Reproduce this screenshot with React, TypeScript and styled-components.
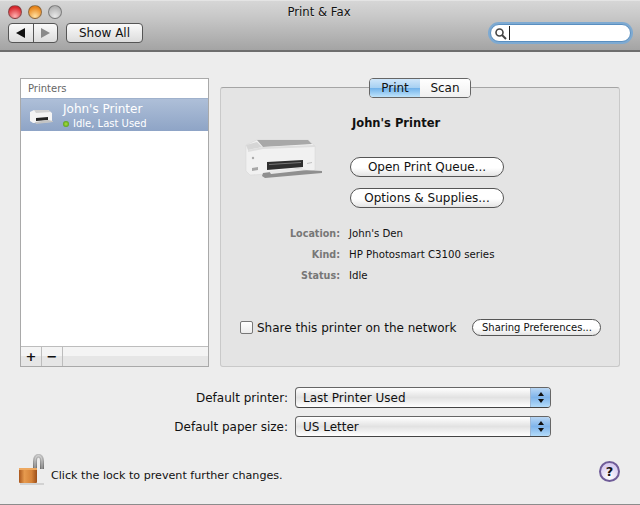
import styled, { createGlobalStyle } from 'styled-components';

const Global = createGlobalStyle`
  html, body { margin: 0; padding: 0; background: #ededed; }
  body { font-family: "DejaVu Sans", "Open Sans", sans-serif; color: #111; }
`;

const Window = styled.div`
  width: 640px;
  height: 505px;
  overflow: hidden;
  display: flex;
  flex-direction: column;
  background: #ededed;
  border-bottom: 1px solid #8c8c8c;
  box-sizing: border-box;
`;

const TitleBar = styled.header`
  height: 52px;
  flex: none;
  box-sizing: border-box;
  background: linear-gradient(#d6d6d6, #c9c9c9 30%, #a4a4a4);
  border-bottom: 2px solid #6e6e6e;
  border-top: 1px solid #e4e4e4;
`;

const TitleRow = styled.div`
  height: 21px;
  display: grid;
  grid-template-columns: 1fr auto 1fr;
  align-items: center;
  padding: 0 8px;
`;

const Lights = styled.div`
  display: flex;
  gap: 6px;
`;

const Light = styled.span<{ $from: string; $to: string }>`
  width: 14px;
  height: 14px;
  box-sizing: border-box;
  border-radius: 50%;
  border: 1px solid rgba(70, 70, 70, 0.55);
  background: radial-gradient(circle at 50% 85%, ${p => p.$from}, ${p => p.$to} 75%);
`;

const Title = styled.div`
  font-size: 11.7px;
  color: #111;
  margin-left: -2px;
  text-shadow: 0 1px 0 rgba(255, 255, 255, 0.4);
`;

const Toolbar = styled.div`
  display: flex;
  align-items: center;
  padding: 1px 8px 0;
  gap: 8px;
`;

const NavGroup = styled.div`
  width: 50px;
  height: 20px;
  box-sizing: border-box;
  display: flex;
  border: 1px solid #555;
  border-radius: 4px;
  overflow: hidden;
  background: linear-gradient(#fafafa, #dcdcdc);
`;

const NavButton = styled.span<{ $divider?: boolean }>`
  flex: 1;
  display: flex;
  align-items: center;
  justify-content: center;
  ${p => (p.$divider ? 'border-right: 1px solid #555;' : '')}
`;

const ToolButton = styled.div`
  width: 77px;
  height: 20px;
  box-sizing: border-box;
  border: 1px solid #555;
  border-radius: 4px;
  background: linear-gradient(#fafafa, #dcdcdc);
  font-size: 12px;
  display: flex;
  align-items: center;
  justify-content: center;
`;

const SearchField = styled.div`
  margin-left: auto;
  margin-right: 1px;
  width: 141px;
  height: 18px;
  display: flex;
  align-items: center;
  gap: 2px;
  padding-left: 3px;
  box-sizing: border-box;
  background: #fff;
  border-radius: 10px;
  border: 1px solid #5a8fc0;
  box-shadow: 0 0 0 2px #7eaad2;
`;

const Caret = styled.span`
  width: 1px;
  height: 14px;
  background: #222;
`;

const Content = styled.main`
  flex: 1;
  display: flex;
  flex-direction: column;
  padding: 26px 20px 0;
`;

const Columns = styled.div`
  display: flex;
  gap: 11px;
  height: 289px;
`;

const ListPane = styled.section`
  width: 189px;
  height: 289px;
  box-sizing: border-box;
  border: 1px solid #a9a9a9;
  background: #fff;
  display: flex;
  flex-direction: column;
`;

const ListHeader = styled.div`
  height: 19px;
  flex: none;
  font-size: 10px;
  color: #666;
  padding-left: 7px;
  display: flex;
  align-items: center;
`;

const ListRow = styled.div`
  height: 33px;
  flex: none;
  display: flex;
  align-items: center;
  gap: 6px;
  padding: 1px 0 0 9px;
  box-sizing: border-box;
  background: linear-gradient(#aebfd8, #8ea4c6);
  border-top: 1px solid #9fb1cc;
  color: #fff;
`;

const RowText = styled.div`
  display: flex;
  flex-direction: column;
  gap: 2px;
`;

const RowName = styled.div`
  font-size: 12px;
  line-height: 14px;
`;

const RowStatus = styled.div`
  display: flex;
  align-items: center;
  gap: 4px;
  font-size: 10px;
  line-height: 12px;
`;

const StatusDot = styled.span`
  width: 6px;
  height: 6px;
  border-radius: 50%;
  background: radial-gradient(circle, #a7e03c, #3f8a16);
`;

const ListBody = styled.div`
  flex: 1;
`;

const ListFooter = styled.div`
  height: 20px;
  box-sizing: border-box;
  flex: none;
  display: flex;
  border-top: 1px solid #bdbdbd;
  background: linear-gradient(#f4f4f4 50%, #e6e6e6 50%);
`;

const FooterButton = styled.span`
  width: 20px;
  border-right: 1px solid #bdbdbd;
  display: flex;
  align-items: center;
  justify-content: center;
  font-size: 13px;
  font-weight: 700;
  line-height: 1;
`;

const TabbedPane = styled.section`
  width: 400px;
  display: flex;
  flex-direction: column;
  align-items: center;
`;

const Tabs = styled.div`
  height: 20px;
  flex: none;
  width: 102px;
  box-sizing: border-box;
  margin-bottom: -11px;
  display: flex;
  border: 1px solid #666;
  border-radius: 4px;
  overflow: hidden;
  background: #fff;
  position: relative;
  z-index: 1;
`;

const Tab = styled.span<{ $active?: boolean }>`
  flex: 1;
  font-size: 12px;
  display: flex;
  align-items: center;
  justify-content: center;
  background: ${p =>
    p.$active
      ? 'linear-gradient(#cfe6fa, #a6d0f2 50%, #6fb1ea 50%, #bfe4fb)'
      : 'linear-gradient(#fff, #f0f0f0)'};
`;

const Panel = styled.div`
  width: 100%;
  height: 280px;
  box-sizing: border-box;
  background: #e4e4e4;
  border: 1px solid #c9c9c9;
  border-top-color: #a5a5a5;
  border-radius: 3px;
  padding: 28px 0 0;
  display: flex;
  flex-direction: column;
`;

const PanelTitle = styled.div`
  font-size: 11.5px;
  font-weight: 700;
  margin-left: 131px;
  line-height: 14px;
`;

const ActionRow = styled.div`
  display: flex;
  margin-top: 27px;
  padding-left: 24px;
`;

const PrinterArt = styled.svg`
  width: 80px;
  height: 48px;
  margin-right: 25px;
  margin-top: -20px;
  filter: blur(0.4px);
`;

const ActionStack = styled.div`
  display: flex;
  flex-direction: column;
  gap: 11px;
`;

const PillButton = styled.div<{ $small?: boolean }>`
  width: ${p => (p.$small ? '129px' : '154px')};
  height: ${p => (p.$small ? '17px' : '20px')};
  box-sizing: border-box;
  border: 1px solid #555;
  border-radius: 10px;
  background: linear-gradient(#fff, #fff 55%, #e4e4e4);
  font-size: ${p => (p.$small ? '10px' : '12px')};
  display: flex;
  align-items: center;
  justify-content: center;
`;

const InfoList = styled.dl`
  margin: 19px 0 0;
  display: grid;
  grid-template-columns: 119px 1fr;
  column-gap: 9px;
  row-gap: 7px;
  font-size: 10.2px;
  line-height: 14px;
`;

const InfoLabel = styled.dt`
  text-align: right;
  color: #777;
  font-size: 9.6px;
  font-weight: 700;
`;

const InfoValue = styled.dd`
  margin: 0;
`;

const ShareRow = styled.div`
  margin-top: 36px;
  display: flex;
  align-items: center;
  padding-left: 19px;
`;

const Checkbox = styled.span`
  width: 13px;
  height: 13px;
  box-sizing: border-box;
  border: 1px solid #777;
  border-radius: 2px;
  background: linear-gradient(#fff, #ececec);
  margin-right: 4px;
`;

const ShareLabel = styled.span`
  font-size: 12px;
  margin-right: 16px;
`;

const SelectGrid = styled.div`
  margin-top: 20px;
  display: grid;
  grid-template-columns: 268px 256px;
  column-gap: 7px;
  row-gap: 8px;
  align-items: center;
`;

const SelectLabel = styled.label`
  font-size: 12px;
  text-align: right;
`;

const Select = styled.div`
  height: 21px;
  box-sizing: border-box;
  border: 1px solid #666;
  border-bottom-color: #444;
  border-radius: 4px;
  background: linear-gradient(#fff, #e2e2e2 50%, #fff);
  display: flex;
  align-items: center;
  justify-content: space-between;
  font-size: 12px;
  padding-left: 7px;
  overflow: hidden;
`;

const Stepper = styled.span`
  width: 19px;
  align-self: stretch;
  display: flex;
  flex-direction: column;
  align-items: center;
  justify-content: center;
  gap: 3px;
  border-left: 1px solid #9db8d6;
  background: linear-gradient(#b8d6f4, #7fb4ea 50%, #b4dcfa);
`;

const FooterRow = styled.footer`
  margin-top: 17px;
  height: 34px;
  display: flex;
  align-items: center;
  gap: 2px;
`;

const LockArt = styled.svg`
  flex: none;
  margin-left: -1px;
  filter: blur(0.25px);
`;

const FooterText = styled.span`
  font-size: 11.15px;
  padding-top: 8px;
`;

const HelpButton = styled.span`
  margin-left: auto;
  width: 21px;
  height: 21px;
  box-sizing: border-box;
  border-radius: 50%;
  border: 2px solid #6f5c98;
  background: radial-gradient(circle at 50% 80%, #fff, #d9cdf0 70%);
  font-size: 13px;
  font-weight: 700;
  display: flex;
  align-items: center;
  justify-content: center;
`;

const Triangle = ({ dir, color }: { dir: 'left' | 'right'; color: string }) => (
  <svg width="9" height="10" viewBox="0 0 9 10">
    <path d={dir === 'left' ? 'M0 5 L9 0 V10 Z' : 'M9 5 L0 0 V10 Z'} fill={color} />
  </svg>
);

const StepArrow = ({ up }: { up?: boolean }) => (
  <svg width="6" height="4" viewBox="0 0 6 4">
    <path d={up ? 'M3 0 L6 4 H0 Z' : 'M0 0 H6 L3 4 Z'} fill="#111" />
  </svg>
);

const Printer = () => (
  <PrinterArt viewBox="0 0 80 48">
    <path d="M1 8 L12 3 L63 3 L70 9 V33 L64 35 L5 38 L1 34 Z" fill="#f1f1f1" stroke="#d4d4d4" strokeWidth="0.5" />
    <path d="M12 3 L63 3 L67 7 L18 10 Z" fill="#a8a8a8" />
    <path d="M1 8 L12 5 L17 10 L3 13 Z" fill="#d6d6d6" />
    <path d="M3 13 L18 10 L70 8 V10 L18 12 L3 15 Z" fill="#dedede" />
    <path d="M22 25 L58 23 V30 L22 33 Z" fill="#2f2f2f" />
    <path d="M24 27 L56 25 V26 L24 28 Z" fill="#777" />
    <path d="M18 36 L56 31 L58 33 L77 34 V36 L20 41 L17 39 Z" fill="#8f8f8f" />
    <path d="M24 34 L56 31 L62 33 L26 37 Z" fill="#e8e8e8" />
    <circle cx="8" cy="21" r="1.2" fill="#aaa" />
    <path d="M7 31 L13 30 V33 L7 34 Z" fill="#a8a8a8" />
    <path d="M62 26 L67 25 V26 L62 27 Z" fill="#c0c0c0" />
  </PrinterArt>
);

const SmallPrinter = () => (
  <svg width="27" height="18" viewBox="0 0 27 18">
    <path d="M0 5 L4 3 L18 3 L22 6 V15 L3 16 L0 14 Z" fill="#f4f4f4" />
    <path d="M4 3 L18 3 L21 5 L6 6 Z" fill="#d2d2d2" />
    <path d="M6 11 L18 10 V13 L6 14 Z" fill="#242424" />
    <path d="M5 15 L18 13 L23 14 V15 L6 17 Z" fill="#c4c4c4" />
  </svg>
);

const Lock = () => (
  <LockArt width="30" height="34" viewBox="0 0 30 34">
    <defs>
      <linearGradient id="brass" x1="0" x2="1" y1="0" y2="0">
        <stop offset="0" stopColor="#a9561c" />
        <stop offset="0.3" stopColor="#e69a4e" />
        <stop offset="0.7" stopColor="#d58238" />
        <stop offset="1" stopColor="#9c4e18" />
      </linearGradient>
      <linearGradient id="steel" x1="0" x2="0" y1="0" y2="1">
        <stop offset="0" stopColor="#bdbdbd" />
        <stop offset="1" stopColor="#6f6f6f" />
      </linearGradient>
    </defs>
    <path d="M16 15 V7 C16 0 23 0 23 7 V15" fill="none" stroke="url(#steel)" strokeWidth="4" />
    <path d="M16 15 V7 C16 0 23 0 23 7 V15" fill="none" stroke="#f2f2f2" strokeWidth="0.8" opacity="0.6" />
    <rect x="0" y="14" width="18" height="15" rx="1" fill="url(#brass)" />
    <rect x="0" y="14" width="18" height="2" fill="#eda860" />
    <rect x="1" y="29" width="24" height="2" fill="#d2d2d2" />
  </LockArt>
);

const App = () => (
  <>
    <Global />
    <Window>
      <TitleBar>
        <TitleRow>
          <Lights>
            <Light $from="#ffb0b0" $to="#d8262c" />
            <Light $from="#ffe0a0" $to="#e8851a" />
            <Light $from="#e8e8e8" $to="#b4b4b4" />
          </Lights>
          <Title>Print &amp; Fax</Title>
          <span />
        </TitleRow>
        <Toolbar>
          <NavGroup>
            <NavButton $divider>
              <Triangle dir="left" color="#111" />
            </NavButton>
            <NavButton>
              <Triangle dir="right" color="#8a8a8a" />
            </NavButton>
          </NavGroup>
          <ToolButton>Show All</ToolButton>
          <SearchField>
            <svg width="13" height="13" viewBox="0 0 13 13">
              <circle cx="5.5" cy="5.5" r="3.5" fill="none" stroke="#444" strokeWidth="1.6" />
              <path d="M8 8 L12 12" stroke="#444" strokeWidth="2" />
            </svg>
            <Caret />
          </SearchField>
        </Toolbar>
      </TitleBar>
      <Content>
        <Columns>
          <ListPane>
            <ListHeader>Printers</ListHeader>
            <ListRow>
              <SmallPrinter />
              <RowText>
                <RowName>John's Printer</RowName>
                <RowStatus>
                  <StatusDot />
                  Idle, Last Used
                </RowStatus>
              </RowText>
            </ListRow>
            <ListBody />
            <ListFooter>
              <FooterButton>+</FooterButton>
              <FooterButton>−</FooterButton>
            </ListFooter>
          </ListPane>
          <TabbedPane>
            <Tabs>
              <Tab $active>Print</Tab>
              <Tab>Scan</Tab>
            </Tabs>
            <Panel>
              <PanelTitle>John's Printer</PanelTitle>
              <ActionRow>
                <Printer />
                <ActionStack>
                  <PillButton>Open Print Queue...</PillButton>
                  <PillButton>Options &amp; Supplies...</PillButton>
                </ActionStack>
              </ActionRow>
              <InfoList>
                <InfoLabel>Location:</InfoLabel>
                <InfoValue>John's Den</InfoValue>
                <InfoLabel>Kind:</InfoLabel>
                <InfoValue>HP Photosmart C3100 series</InfoValue>
                <InfoLabel>Status:</InfoLabel>
                <InfoValue>Idle</InfoValue>
              </InfoList>
              <ShareRow>
                <Checkbox />
                <ShareLabel>Share this printer on the network</ShareLabel>
                <PillButton $small>Sharing Preferences...</PillButton>
              </ShareRow>
            </Panel>
          </TabbedPane>
        </Columns>
        <SelectGrid>
          <SelectLabel>Default printer:</SelectLabel>
          <Select>
            Last Printer Used
            <Stepper>
              <StepArrow up />
              <StepArrow />
            </Stepper>
          </Select>
          <SelectLabel>Default paper size:</SelectLabel>
          <Select>
            US Letter
            <Stepper>
              <StepArrow up />
              <StepArrow />
            </Stepper>
          </Select>
        </SelectGrid>
        <FooterRow>
          <Lock />
          <FooterText>Click the lock to prevent further changes.</FooterText>
          <HelpButton>?</HelpButton>
        </FooterRow>
      </Content>
    </Window>
  </>
);

export default App;
